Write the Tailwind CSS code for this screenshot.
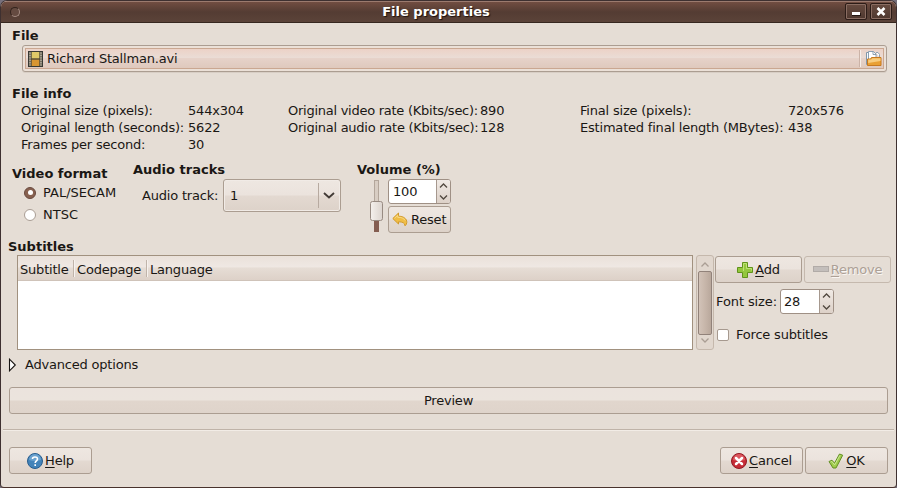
<!DOCTYPE html>
<html lang="en">
<head>
<meta charset="utf-8">
<title>File properties</title>
<script src="https://cdn.jsdelivr.net/npm/@tailwindcss/browser@4"></script>
</head>
<body class="bg-[#77707c] overflow-hidden">
<div class="w-[897px] h-[488px] flex flex-col overflow-hidden rounded-t-[7px] rounded-b-[4px] border border-[#3e3030] border-b-[#49322d] bg-[#e5ddd5] font-['DejaVu_Sans','Liberation_Sans',sans-serif] text-[13px] leading-[17px] tracking-[-0.2px] text-[#1a1714] whitespace-nowrap">

  <!-- Title bar -->
  <header class="h-[22px] shrink-0 flex items-center border-t border-t-[#9b7a6e] border-b border-b-[#36271f] bg-linear-to-b from-[#714d41] via-[#543c33] to-[#5b4339] pl-[9px] pr-[4px]">
    <div class="w-[60px]"><div class="size-[10px] rounded-full border border-[#33231d] border-b-[#a68d83] border-r-[#a68d83] bg-[#654b41]"></div></div>
    <h1 class="flex-1 text-center font-bold tracking-normal text-white pr-[30px] -mt-[2px] [text-shadow:1px_1px_1px_#1d100c]">File properties</h1>
    <div class="w-[60px] flex justify-end gap-[3px] -mt-px">
      <button class="w-[22px] h-[17px] rounded-[2px] border border-[#2c1c17] shadow-[inset_0_0_0_1px_#8a6d62] bg-linear-to-b from-[#674b40] to-[#4f382f] grid place-items-center"><svg width="10" height="9"><rect x="1" y="6" width="9" height="3" fill="#251713"/><rect x="1" y="5" width="8" height="3" fill="#fff"/></svg></button>
      <button class="w-[22px] h-[17px] rounded-[2px] border border-[#2c1c17] shadow-[inset_0_0_0_1px_#8a6d62] bg-linear-to-b from-[#674b40] to-[#4f382f] grid place-items-center"><svg width="10" height="9"><path d="M1.500 1l7 7M8.500 1l-7 7" stroke="#fff" stroke-width="2.500"/></svg></button>
    </div>
  </header>

  <main class="flex-1 flex flex-col">
    <h2 class="font-bold tracking-normal ml-[11px] mt-[4px] h-[18px]">File</h2>

    <button class="ml-[21px] w-[865px] h-[27px] shrink-0 rounded-[3px] border border-[#ab9d91] bg-[#ebe0d7] p-[2px] shadow-[0_1px_0_#d8cec5]">
      <span class="h-full flex items-center border border-[#caa791] bg-[linear-gradient(#ecd2c7,#eadcd5_45%,#e6d2c9_50%,#dfc9bd)] pl-[2px] pr-px">
        <svg width="15" height="16" viewBox="0 0 15 16"><rect x=".5" y=".5" width="14" height="15" fill="#756d5e" stroke="#383934"/><rect x="3" y="1" width="9" height="6.500" fill="#dfc968"/><rect x="3" y="8.500" width="9" height="6.500" fill="#d99632"/><path d="M3 8h9" stroke="#514320"/><path d="M2 1.500v13M13 1.500v13" stroke="#d8d8cb" stroke-dasharray="1.200 1.200"/><path d="M3.500 1v14M11.500 1v14" stroke="#4b4738" stroke-width=".7"/></svg>
        <span class="pl-[4px] flex-1 text-left">Richard Stallman.avi</span>
        <i class="w-[2px] h-[17px] border-l border-l-[#cbb3a7] border-r border-r-[#f6eee9] mr-[4px]"></i>
        <svg width="17" height="16" viewBox="0 0 17 16"><path d="M1.500 13.500V1.500h2v12z" fill="#f9fbfd" stroke="#8296a8"/><path d="M3.500 8V.5h5l2.500 2.500V8" fill="#fff" stroke="#8ba0b4"/><path d="M11 1.500h2l1.500 2V6" fill="#fff" stroke="#91a2b1"/><path d="M8 .5V3.500h3" fill="none" stroke="#758ba0" stroke-width=".8"/><path d="M2.500 14.500V8h3l1-1.500h9.500v8z" fill="#e9a033" stroke="#c7791f"/><path d="M3.200 8.500h3l1-1.300h8.300v2.800L3.200 12z" fill="#f8cc7d"/></svg>
      </span>
    </button>

    <h2 class="font-bold tracking-normal ml-[11px] mt-[13px] h-[17px]">File info</h2>
    <section class="ml-[20px] grid grid-cols-[167px_100px_192px_100px_208px_80px] auto-rows-[17px] h-[51px] shrink-0">
      <span>Original size (pixels):</span><span>544x304</span><span class="tracking-[-0.26px]">Original video rate (Kbits/sec):</span><span>890</span><span>Final size (pixels):</span><span>720x576</span>
      <span>Original length (seconds):</span><span>5622</span><span class="tracking-[-0.26px]">Original audio rate (Kbits/sec):</span><span>128</span><span>Estimated final length (MBytes):</span><span>438</span>
      <span>Frames per second:</span><span>30</span>
    </section>

    <section class="flex h-[85px] shrink-0 ml-[11px]">
      <div class="w-[121px] pt-[12px]">
        <h2 class="font-bold tracking-normal">Video format</h2>
        <label class="flex items-center mt-[2px] ml-[12px] gap-[7px]"><i class="size-[12px] rounded-full border border-[#6a4a3f] bg-[#87604f] grid place-items-center"><i class="size-[5px] rounded-full bg-white"></i></i><span class="tracking-normal">PAL/SECAM</span></label>
        <label class="flex items-center mt-[5px] ml-[12px] gap-[7px]"><i class="size-[12px] rounded-full border border-[#a99d94] bg-white"></i><span class="tracking-normal">NTSC</span></label>
      </div>
      <div class="w-[224px] pt-[8px]">
        <h2 class="font-bold tracking-normal">Audio tracks</h2>
        <div class="flex items-center ml-[9px] mt-px">
          <span class="w-[81px]">Audio track:</span>
          <button class="w-[118px] h-[33px] rounded-[3px] border border-[#ab9d91] bg-[linear-gradient(#eee7e1,#ebe3dd_48%,#e3d9d1_52%,#ddd2c9)] shadow-[inset_0_0_0_1px_#f1ebe6] flex items-center pl-[6px]"><span class="w-[88px] text-left">1</span><i class="h-[25px] border-l border-[#b7aaa0] mr-[4px]"></i><svg width="12" height="8" class="mt-px"><path d="M1 1l5 4.500L11 1" fill="none" stroke="#423b36" stroke-width="1.900"/></svg></button>
        </div>
      </div>
      <div class="pt-[8px]">
        <h2 class="font-bold tracking-normal">Volume (%)</h2>
        <div class="flex mt-px ml-[13px]">
          <svg width="14" height="53" class="mt-px"><defs><linearGradient id="k"><stop stop-color="#f5f1ed"/><stop offset="1" stop-color="#dcd4ce"/></linearGradient></defs><rect x="4.500" y=".5" width="4" height="51" fill="#d8cdc3" stroke="#b3a69b"/><rect x="4" y="40" width="5" height="12" fill="#845d50"/><rect x=".5" y="21.500" width="12" height="19" rx="2" fill="url(#k)" stroke="#988b82"/></svg>
          <div class="ml-[4px] flex flex-col gap-[2px]">
            <div class="w-[63px] h-[25px] flex rounded-[3px] border border-[#9f9085] bg-white overflow-hidden"><span class="flex-1 pl-[4px] leading-[24px]">100</span><span class="w-[14px] border-l border-[#a6988e] bg-linear-to-b from-[#f0eae5] to-[#ddd1c8] flex flex-col items-center justify-between py-[3px]"><svg width="9" height="5"><path d="M1 4.500L4.500 1 8 4.500" fill="none" stroke="#51483f" stroke-width="1.300"/></svg><svg width="9" height="5"><path d="M1 .5L4.500 4 8 .5" fill="none" stroke="#51483f" stroke-width="1.300"/></svg></span></div>
            <button class="w-[63px] h-[27px] rounded-[3px] border border-[#ab9d91] bg-[linear-gradient(#eee7e1,#ebe3dd_48%,#e3d9d1_52%,#ddd2c9)] flex items-center pl-[3px] gap-[3px]"><svg width="16" height="16" viewBox="0 0 16 16"><path d="M.8 6.500L6.500 1v3.200c5 0 8.500 2.600 8.300 6.300-.1 1.500-.8 2.600-1.800 3.300-.2-3-2.500-4-6.500-4V12z" fill="#f0bd45" stroke="#d19a2c"/><path d="M2.500 6.300L5.700 3.300v2c3.500 0 6 .7 7.500 3.200" fill="none" stroke="#f9db87"/></svg>Reset</button>
          </div>
        </div>
      </div>
    </section>

    <h2 class="font-bold tracking-normal ml-[7px] h-[17px]">Subtitles</h2>
    <section class="flex ml-[16px] h-[95px] shrink-0">
      <div class="w-[676px] border border-[#a1917f] bg-white">
        <div class="h-[25px] flex items-center border-b border-[#cfc3b9] bg-[linear-gradient(#eae1da,#efe8e3_45%,#e6ddd5_50%,#ddd1c8)]">
          <span class="w-[56px] pl-[2px] h-[17px] leading-[19px] border-r border-[#c0b4aa]">Subtitle</span>
          <span class="w-[73px] pl-[2px] h-[17px] leading-[19px] border-l border-l-[#f7f2ee] border-r border-r-[#c0b4aa]">Codepage</span>
          <span class="pl-[2px] h-[17px] leading-[19px] border-l border-l-[#f7f2ee]">Language</span>
        </div>
      </div>
      <div class="ml-[3px] w-[18px] border border-[#c5b8ac] rounded-[3px] bg-[#e1d7ce] flex flex-col items-center justify-between pt-[6px] pb-[6px]">
        <svg width="8" height="5"><path d="M.500 4.500L4 1l3.500 3.500" fill="none" stroke="#aa9e94" stroke-width="1.300"/></svg>
        <i class="w-[14px] h-[64px] rounded-[2px] border border-[#91827a] bg-linear-to-r from-[#d2c3b8] via-[#c7b6aa] to-[#b9a89c]"></i>
        <svg width="8" height="5"><path d="M.500 .5L4 4 7.500 .5" fill="none" stroke="#aa9e94" stroke-width="1.300"/></svg>
      </div>
      <div class="ml-px pt-px">
        <div class="flex gap-[2px]">
          <button class="w-[87px] h-[27px] rounded-[3px] border border-[#ab9d91] bg-[linear-gradient(#eee7e1,#ebe3dd_48%,#e3d9d1_52%,#ddd2c9)] flex items-center justify-center gap-[2px]"><svg width="16" height="16" viewBox="0 0 16 16"><path d="M5.500 .5h5v5h5v5h-5v5h-5v-5h-5v-5h5z" fill="#94c73d" stroke="#60921b"/><path d="M6.500 9V1.500h3v5h5v2" fill="none" stroke="#bfe276"/></svg><span><u class="underline underline-offset-2">A</u>dd</span></button>
          <button class="w-[87px] h-[27px] rounded-[3px] border border-[#c5b9ae] bg-[#e5ddd5] text-[#aca096] [text-shadow:1px_1px_0_#f9f6f3] flex items-center justify-center gap-[2px]"><svg width="16" height="16"><rect x=".5" y="4.500" width="15" height="5" fill="#c3bebb" stroke="#b1aba7"/></svg><span><u class="underline underline-offset-2">R</u>emove</span></button>
        </div>
        <div class="flex items-center mt-[6px] ml-px">
          <span class="w-[64px] tracking-[-0.1px]">Font size:</span>
          <div class="w-[54px] h-[25px] flex rounded-[3px] border border-[#9f9085] bg-white overflow-hidden"><span class="flex-1 pl-[3px] leading-[23px]">28</span><span class="w-[14px] border-l border-[#a6988e] bg-linear-to-b from-[#f0eae5] to-[#ddd1c8] flex flex-col items-center justify-between py-[3px]"><svg width="9" height="5"><path d="M1 4.500L4.500 1 8 4.500" fill="none" stroke="#51483f" stroke-width="1.300"/></svg><svg width="9" height="5"><path d="M1 .5L4.500 4 8 .5" fill="none" stroke="#51483f" stroke-width="1.300"/></svg></span></div>
        </div>
        <label class="flex items-center mt-[12px] ml-[2px] gap-[7px]"><i class="size-[12px] rounded-[2px] border border-[#a6998f] bg-white"></i>Force subtitles</label>
      </div>
    </section>

    <div class="flex items-center h-[17px] mt-[6px] ml-[7px]"><svg width="9" height="14"><path d="M1.500 1.200v11.600L7.300 7z" fill="#fff" stroke="#171412" stroke-width="1.100"/></svg><span class="ml-[8px]">Advanced options</span></div>

    <button class="ml-[8px] mt-[14px] w-[879px] h-[27px] shrink-0 rounded-[3px] border border-[#ab9d91] bg-[linear-gradient(#ebe3dd,#ebe4dd_48%,#e1d6cd_52%,#dfd4cb)]">Preview</button>
    <div class="mx-[2px] mt-[15px] h-[2px] shrink-0 border-t border-t-[#bfb3a8] border-b border-b-[#f2ece6]"></div>

    <footer class="flex mt-[16px] ml-[8px] mr-[8px] h-[27px] shrink-0 gap-[2px]">
      <button class="w-[83px] rounded-[3px] border border-[#ab9d91] bg-[linear-gradient(#eee7e1,#ebe3dd_48%,#e3d9d1_52%,#ddd2c9)] flex items-center justify-center gap-[2px] mr-auto"><svg width="16" height="16" viewBox="0 0 16 16"><circle cx="8" cy="8" r="7.500" fill="#4383b9" stroke="#285d8d"/><path d="M2 7a6 6 0 0 1 12 0q-6 2-12 0" fill="#6ba2cf"/><path d="M5.500 6C5.500 3.300 10.500 3.200 10.500 6c0 1.800-2.300 1.800-2.300 4M8.200 11.300v1.800" fill="none" stroke="#fff" stroke-width="1.600"/></svg><span><u class="underline underline-offset-2">H</u>elp</span></button>
      <button class="w-[83px] rounded-[3px] border border-[#ab9d91] bg-[linear-gradient(#eee7e1,#ebe3dd_48%,#e3d9d1_52%,#ddd2c9)] flex items-center justify-center gap-[2px]"><svg width="16" height="16" viewBox="0 0 16 16"><circle cx="8" cy="8" r="7.500" fill="#c52c36" stroke="#911923"/><path d="M2 7a6 6 0 0 1 12 0q-6 2-12 0" fill="#dc5961"/><path d="M5 5l6 6M11 5l-6 6" stroke="#fff" stroke-width="2.500" stroke-linecap="round"/></svg><span><u class="underline underline-offset-2">C</u>ancel</span></button>
      <button class="w-[83px] rounded-[3px] border border-[#ab9d91] bg-[linear-gradient(#eee7e1,#ebe3dd_48%,#e3d9d1_52%,#ddd2c9)] flex items-center justify-center gap-[2px]"><svg width="16" height="16" viewBox="0 0 16 16"><path d="M1 8.500l3-1.300 2.500 3L11.500 1l3.200 1.200L8 15H5z" fill="#9fcc4c" stroke="#638f24"/><path d="M2.500 9l1.300-.6 2.800 3.500L12 2.300" fill="none" stroke="#cce994"/></svg><span><u class="underline underline-offset-2">O</u>K</span></button>
    </footer>
  </main>
</div>
</body>
</html>
